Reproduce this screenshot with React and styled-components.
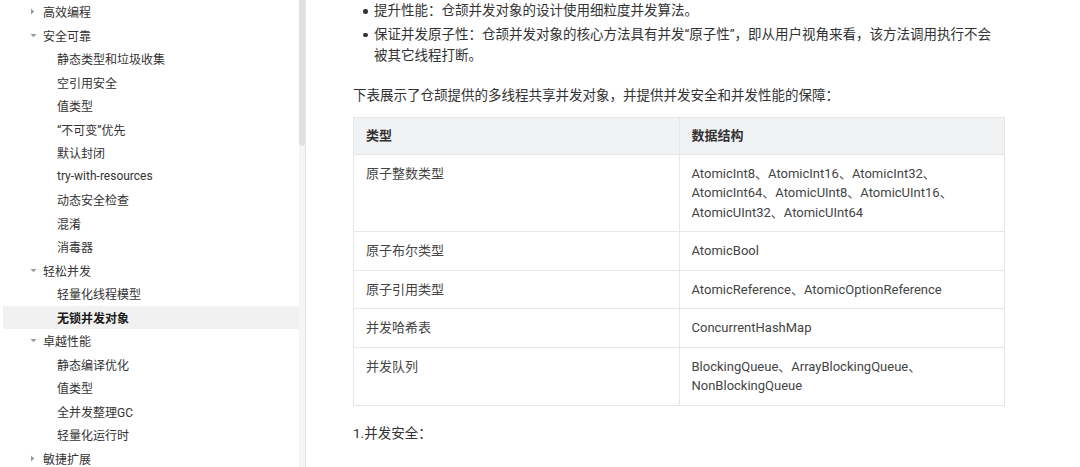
import React from "react";
import styled, { createGlobalStyle } from "styled-components";

const Global = createGlobalStyle`
  html, body { margin: 0; padding: 0; background: #fff; }
  body {
    font-family: "Roboto", "Noto Sans CJK SC", sans-serif;
    color: #333;
    -webkit-font-smoothing: antialiased;
  }
  * { box-sizing: border-box; }
`;

const Page = styled.div`
  display: flex;
  width: 1080px;
  height: 467px;
  overflow: hidden;
`;

const Sidebar = styled.aside`
  display: flex;
  width: 306px;
  flex: none;
  height: 100%;
`;

const Nav = styled.nav`
  width: 299px;
  padding: 0 0 0 3px;
`;

const Row = styled.div`
  display: flex;
  align-items: center;
  height: 23.5px;
  padding-left: ${(p) => (p.$level === 2 ? 54 : 27)}px;
  font-size: 12px;
  color: ${(p) => (p.$active ? "#191919" : "#333")};
  font-weight: ${(p) => (p.$active ? 700 : 400)};
  background: ${(p) => (p.$active ? "#f1f1f1" : "transparent")};
  white-space: nowrap;
`;

const Caret = styled.span`
  width: 13px;
  display: inline-flex;
  justify-content: flex-start;
  svg { display: block; }
`;

const Track = styled.div`
  width: 7px;
  height: 100%;
  background: #f5f5f5;
  border-right: 1px solid #e4e4e4;
`;

const Thumb = styled.div`
  width: 6px;
  height: 146px;
  background: #e1e1e1;
  border-radius: 0 0 3px 3px;
`;

const Content = styled.main`
  flex: 1;
  padding: 0 75px 0 47px;
  font-size: 13.5px;
  color: #333;
`;

const List = styled.ul`
  margin: 0;
  padding: 0 8px 0 21px;
  list-style: none;
`;

const Item = styled.li`
  position: relative;
  line-height: 21.5px;
  margin-bottom: 2px;
  &::before {
    content: "";
    position: absolute;
    left: -11px;
    top: 9px;
    width: 4.5px;
    height: 4.5px;
    border-radius: 50%;
    background: #333;
  }
`;

const Para = styled.p`
  margin: 18.5px 0 10.5px;
  line-height: 21px;
`;

const Table = styled.table`
  width: 652px;
  border-collapse: collapse;
  table-layout: fixed;
  font-size: 13px;
`;

const Th = styled.th`
  text-align: left;
  font-weight: 700;
  color: #333;
  background: #f1f2f4;
  border: 1px solid #e6e6e6;
  padding: 8.5px 12px;
  line-height: 19px;
`;

const Td = styled.td`
  vertical-align: top;
  color: #444;
  border: 1px solid #e6e6e6;
  padding: 9px 12px;
  line-height: 19.5px;
`;

const Foot = styled.p`
  margin: 17.5px 0 0;
  line-height: 21px;
`;

const Down = () => (
  <svg width="7" height="5" viewBox="0 0 7 5"><path d="M0.5 1h6L3.5 4.2z" fill="#999" /></svg>
);
const Right = () => (
  <svg width="5" height="7" viewBox="0 0 5 7"><path d="M1 0.5v6L4.2 3.5z" fill="#999" /></svg>
);

const nav = [
  { t: "高效编程", l: 1, open: false },
  { t: "安全可靠", l: 1, open: true },
  { t: "静态类型和垃圾收集", l: 2 },
  { t: "空引用安全", l: 2 },
  { t: "值类型", l: 2 },
  { t: "“不可变”优先", l: 2 },
  { t: "默认封闭", l: 2 },
  { t: "try-with-resources", l: 2 },
  { t: "动态安全检查", l: 2 },
  { t: "混淆", l: 2 },
  { t: "消毒器", l: 2 },
  { t: "轻松并发", l: 1, open: true },
  { t: "轻量化线程模型", l: 2 },
  { t: "无锁并发对象", l: 2, active: true },
  { t: "卓越性能", l: 1, open: true },
  { t: "静态编译优化", l: 2 },
  { t: "值类型", l: 2 },
  { t: "全并发整理GC", l: 2 },
  { t: "轻量化运行时", l: 2 },
  { t: "敏捷扩展", l: 1, open: false },
];

const rows = [
  ["原子整数类型", "AtomicInt8、AtomicInt16、AtomicInt32、AtomicInt64、AtomicUInt8、AtomicUInt16、AtomicUInt32、AtomicUInt64"],
  ["原子布尔类型", "AtomicBool"],
  ["原子引用类型", "AtomicReference、AtomicOptionReference"],
  ["并发哈希表", "ConcurrentHashMap"],
  ["并发队列", "BlockingQueue、ArrayBlockingQueue、NonBlockingQueue"],
];

export default function App() {
  return (
    <>
      <Global />
      <Page>
        <Sidebar>
          <Nav>
            {nav.map((n, i) => (
              <Row key={i} $level={n.l} $active={n.active}>
                {n.l === 1 && <Caret>{n.open ? <Down /> : <Right />}</Caret>}
                {n.t}
              </Row>
            ))}
          </Nav>
          <Track>
            <Thumb />
          </Track>
        </Sidebar>
        <Content>
          <List>
            <Item>提升性能：仓颉并发对象的设计使用细粒度并发算法。</Item>
            <Item>保证并发原子性：仓颉并发对象的核心方法具有并发“原子性”，即从用户视角来看，该方法调用执行不会被其它线程打断。</Item>
          </List>
          <Para>下表展示了仓颉提供的多线程共享并发对象，并提供并发安全和并发性能的保障：</Para>
          <Table>
            <thead>
              <tr>
                <Th>类型</Th>
                <Th>数据结构</Th>
              </tr>
            </thead>
            <tbody>
              {rows.map((r, i) => (
                <tr key={i}>
                  <Td>{r[0]}</Td>
                  <Td>{r[1]}</Td>
                </tr>
              ))}
            </tbody>
          </Table>
          <Foot>1.并发安全：</Foot>
        </Content>
      </Page>
    </>
  );
}
